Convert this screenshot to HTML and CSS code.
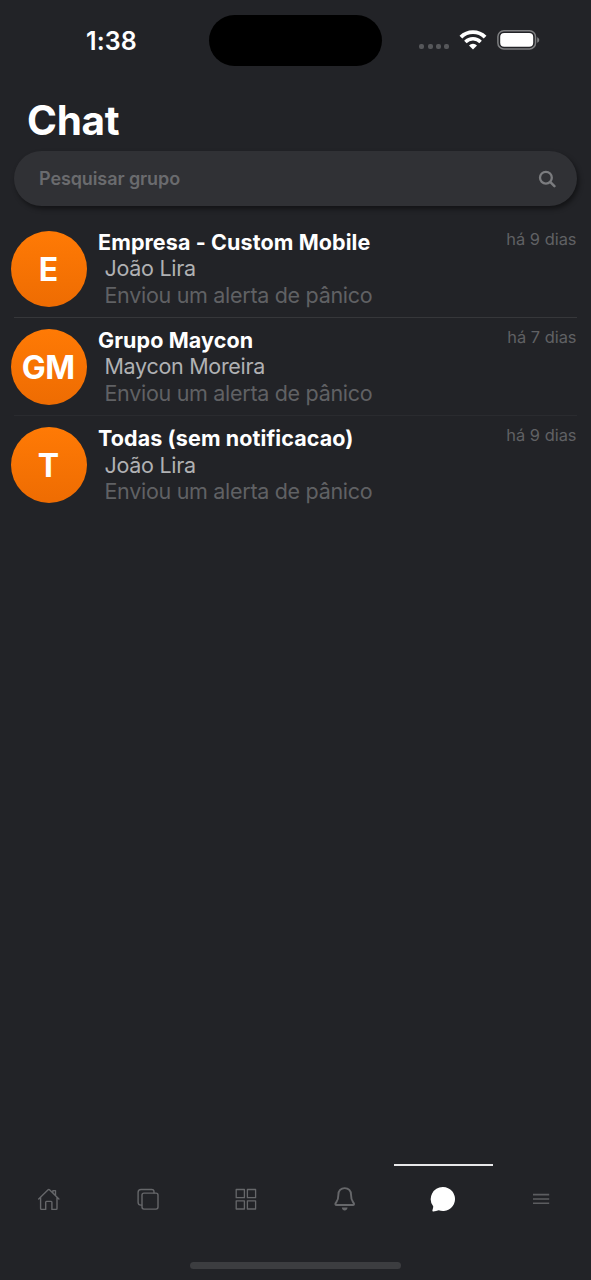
FILE: index.html
```html
<!DOCTYPE html>
<html lang="pt-BR">
<head>
<meta charset="utf-8">
<title>Chat</title>
<link rel="stylesheet" href="styles.css">
</head>
<body>
<div class="screen">
  <header class="status">
    <span class="clock">1:38</span>
    <span class="island"></span>
    <span class="signals">
      <span class="dots"><i></i><i></i><i></i><i></i></span>
      <svg class="wifi" width="28" height="22" viewBox="0 0 28 22" fill="none" stroke="#fff">
        <path d="M1.9 8.100a17.200 17.200 0 0 1 24.200 0" stroke-width="3.900"/>
        <path d="M6.400 12.900a10.800 10.800 0 0 1 15.200 0" stroke-width="3.500"/>
        <path d="M14 20.500l-4-4.100a5.700 5.700 0 0 1 8 0z" fill="#fff" stroke="none"/>
      </svg>
      <svg class="battery" width="44" height="22" viewBox="0 0 44 22">
        <rect x=".9" y="1.700" width="37.600" height="18.200" rx="6" fill="none" stroke="#7e7f81" stroke-width="1.500"/>
        <rect x="3.200" y="4.100" width="33" height="13.600" rx="4" fill="#fff"/>
        <path d="M40.200 8.200c2.700 1 2.700 4.600 0 5.600z" fill="#7e7f81"/>
      </svg>
    </span>
  </header>

  <h1 class="title">Chat</h1>

  <div class="search">
    <span class="placeholder">Pesquisar grupo</span>
    <svg width="18" height="18" viewBox="0 0 18 18" fill="none" stroke="#7b7c7f" stroke-linecap="round">
      <circle cx="7.900" cy="7.700" r="5.900" stroke-width="2.300"/>
      <path d="M12.400 12.200l4 4" stroke-width="2.500"/>
    </svg>
  </div>

  <main class="list">
    <article class="row">
      <div class="avatar">E</div>
      <div class="body">
        <div class="name">Empresa - Custom Mobile</div>
        <div class="author">João Lira</div>
        <div class="message">Enviou um alerta de pânico</div>
      </div>
      <time class="date">há 9 dias</time>
    </article>
    <article class="row">
      <div class="avatar">GM</div>
      <div class="body">
        <div class="name">Grupo Maycon</div>
        <div class="author">Maycon Moreira</div>
        <div class="message">Enviou um alerta de pânico</div>
      </div>
      <time class="date">há 7 dias</time>
    </article>
    <article class="row">
      <div class="avatar">T</div>
      <div class="body">
        <div class="name">Todas (sem notificacao)</div>
        <div class="author">João Lira</div>
        <div class="message">Enviou um alerta de pânico</div>
      </div>
      <time class="date">há 9 dias</time>
    </article>
  </main>

  <nav class="tabs">
    <a class="tab">
      <svg width="24" height="24" viewBox="0 -.4 24 24" fill="none" stroke="#66676a" stroke-width="1.400" stroke-linejoin="round" stroke-linecap="round">
        <path d="M1.700 11.600L11.100 2.400q.7-.7 1.400 0l9.400 9.200M3.600 10v11.200q0 .8.800.8h4.300V14.800q0-.8.800-.8h4.600q.8 0 .8.800V22h4.300q.8 0 .8-.8V10M15.900 5.300V3.200h2.600v4.500"/>
      </svg>
    </a>
    <a class="tab">
      <svg width="24" height="24" viewBox="0 -.4 24 24" fill="none" stroke="#66676a" stroke-width="1.400" stroke-linejoin="round" stroke-linecap="round">
        <rect x="6" y="5.700" width="16" height="16" rx="2"/>
        <path d="M18 5.500V4.500q0-2.400-2.400-2.400H5q-2.900 0-2.900 2.900v9.800q0 2.900 2.900 2.900h.8"/>
      </svg>
    </a>
    <a class="tab">
      <svg width="24" height="24" viewBox="0 -.5 24 24" fill="none" stroke="#66676a" stroke-width="1.300" stroke-linejoin="round">
        <rect x="2.200" y="2" width="8.200" height="8.200"/><rect x="13.400" y="2" width="8.200" height="8.200"/>
        <rect x="2.200" y="13.300" width="8.200" height="8.200"/><rect x="13.400" y="13.300" width="8.200" height="8.200"/>
      </svg>
    </a>
    <a class="tab">
      <svg width="24" height="26" viewBox="0 -1.500 24 26" fill="none" stroke="#66676a" stroke-width="1.900" stroke-linejoin="round">
        <path d="M11.700.6c-3.900 0-6.300 2.800-6.300 6.300 0 5.600-1.100 6.300-2.600 8.500-.8 1.200-.5 2.100.8 2.100h16.200c1.300 0 1.600-.9.800-2.100-1.500-2.200-2.600-2.900-2.600-8.500 0-3.500-2.400-6.300-6.300-6.300z"/>
        <path d="M8.800 20h5.800c-.3 1.900-1.400 3-2.900 3s-2.600-1.100-2.900-3z" fill="#66676a" stroke="none"/>
      </svg>
    </a>
    <a class="tab active">
      <svg width="26" height="26" viewBox="0 0 26 26" fill="#fff">
        <path d="M13 1a12 12 0 1 1-4.300 23.200c-1.800.4-3.400.9-5.400 1.300-.7.100-1-.2-.9-.9.300-1.700.9-3 .8-4.400A12 12 0 0 1 13 1z"/>
      </svg>
    </a>
    <a class="tab">
      <svg width="24" height="24" viewBox="0 -.5 24 24" stroke="#5c5d60" stroke-width="1.600">
        <path d="M3 7.100h16.200M3 11.500h16.200M3 15.800h16.200"/>
      </svg>
    </a>
  </nav>
  <div class="home-indicator"></div>
</div>
</body>
</html>
```
FILE: styles.css
```css
* { box-sizing: border-box; }
body {
  margin: 0;
  background: #222327;
  color: #fff;
  font-family: Inter, "Liberation Sans", sans-serif;
}
.screen {
  width: 591px;
  height: 1280px;
  display: flex;
  flex-direction: column;
  overflow: hidden;
}
.status {
  height: 80px;
  padding-top: 15px;
  display: grid;
  grid-template-columns: 209px 173px 1fr;
  align-items: start;
}
.clock {
  padding-left: 86px;
  font-size: 25px;
  line-height: 52px;
  font-weight: 570;
  letter-spacing: 0.1px;
}
.island { height: 51px; border-radius: 26px; background: #000; }
.signals { display: flex; padding-left: 37px; height: 51px; }
.dots { display: flex; gap: 3.4px; width: 40px; padding: 28.5px 0 0 0.2px; }
.dots i { width: 5px; height: 5px; border-radius: 2px; background: #56575a; }
.wifi { margin-top: 13.5px; }
.battery { margin: 13.5px 0 0 9.5px; }
.title {
  margin: 0 0 0 27px;
  padding-top: 16px;
  height: 71px;
  font-size: 40.5px;
  line-height: 50px;
  font-weight: 700;
  letter-spacing: -0.3px;
}
.search {
  margin: 0 14px;
  height: 55px;
  border-radius: 28px;
  background: #303135;
  box-shadow: 2px 3px 5px rgba(0, 0, 0, .45);
  display: flex;
  align-items: center;
  justify-content: space-between;
  padding: 1px 21px 0 25px;
}
.placeholder {
  margin-top: -1px;
  font-size: 18px;
  font-weight: 600;
  letter-spacing: -0.1px;
  color: #6a6b6e;
}
.list { flex: 1; padding: 20px 14px 0 11px; }
.row { position: relative; display: flex; height: 98.2px; padding-top: 4.5px; }
.row + .row::before {
  content: "";
  position: absolute;
  left: 3px;
  right: 0;
  top: -7.5px;
  height: 1px;
  background: #36373a;
}
.row:nth-child(3)::before { background: #2a2b2f; }
.avatar {
  width: 76px;
  height: 76px;
  padding: 1px 1.5px 0 0;
  border-radius: 50%;
  background: linear-gradient(#ff7a05, #ee6c02);
  display: flex;
  align-items: center;
  justify-content: center;
  font-size: 32px;
  font-weight: 650;
  letter-spacing: -0.5px;
}
.body {
  flex: 1;
  margin-left: 11px;
  margin-top: -1.8px;
  font-size: 21.5px;
  line-height: 26.6px;
  white-space: nowrap;
}
.name { font-weight: 650; letter-spacing: 0.1px; }
.author, .message { padding-left: 6.5px; letter-spacing: -0.3px; }
.author { color: #b0b1b3; }
.message { color: #606164; }
.date { margin: -2px 0.5px 0 0; font-size: 16.4px; line-height: 20px; color: #606164; }
.tabs { display: grid; grid-template-columns: repeat(6, 1fr); height: 70px; }
.tab { display: flex; align-items: center; justify-content: center; }
.active { border-top: 2px solid #e8e8e9; padding-bottom: 2px; }
.home-indicator {
  width: 211px;
  height: 7px;
  margin: 28px auto 11px;
  border-radius: 4px;
  background: #3c3d40;
}
```
